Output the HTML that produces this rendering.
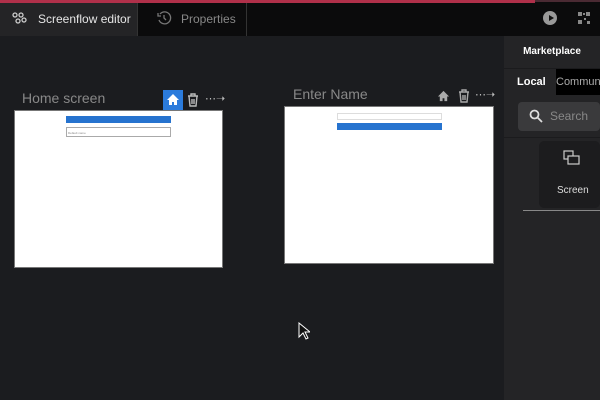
<!DOCTYPE html><html><head><style>
*{margin:0;padding:0;box-sizing:border-box}
body{width:600px;height:400px;background:#1b1c1f;font-family:"Liberation Sans",sans-serif;position:relative;overflow:hidden}
.a{position:absolute}
</style></head><body>
<div class="a" style="left:0;top:0;width:600px;height:36px;background:#0b0b0c"></div>
<div class="a" style="left:0;top:0;width:535px;height:3px;background:#b0304a"></div>
<div class="a" style="left:535px;top:0;width:65px;height:2px;background:#4a2a33"></div>
<div class="a" style="left:0;top:3px;width:137px;height:33px;background:#242426"></div>
<div class="a" style="left:137px;top:3px;width:1px;height:33px;background:#333"></div>
<div class="a" style="left:246px;top:3px;width:1px;height:33px;background:#333"></div>
<svg class="a" style="left:12px;top:12px" width="16" height="14" viewBox="0 0 16 14" fill="none" stroke="#ccc" stroke-width="1.3"><circle cx="3" cy="3" r="2"/><circle cx="9" cy="3" r="2"/><circle cx="6" cy="9" r="2"/><circle cx="12" cy="8" r="2"/></svg>
<div class="a" style="left:38px;top:12px;color:#e6e6e6;font-size:12px">Screenflow editor</div>
<svg class="a" style="left:156px;top:10px" width="16" height="16" viewBox="0 0 16 16" fill="none" stroke="#777" stroke-width="1.3"><path d="M3 10A6 6 0 1 0 4 4"/><path d="M8 5v3l2 2"/><path d="M2 3v3h3"/></svg>
<div class="a" style="left:181px;top:12px;color:#888;font-size:12px">Properties</div>
<div class="a" style="left:543px;top:11px;width:14px;height:14px;border-radius:50%;background:#999"></div>
<div class="a" style="left:549px;top:15px;width:0;height:0;border-left:5px solid #111;border-top:3px solid transparent;border-bottom:3px solid transparent"></div>
<svg class="a" style="left:578px;top:12px" width="12" height="12" viewBox="0 0 12 12" fill="#888"><rect x="0" y="0" width="4" height="4"/><rect x="8" y="0" width="4" height="4"/><rect x="0" y="8" width="4" height="4"/><rect x="6" y="6" width="2" height="2"/><rect x="9" y="9" width="3" height="3"/><rect x="5" y="1" width="2" height="2"/></svg>

<div class="a" style="left:22px;top:90px;color:#888;font-size:14px">Home screen</div>
<div class="a" style="left:163px;top:90px;width:20px;height:20px;background:#2b7bdc"></div>
<svg class="a" style="left:166px;top:93px" width="14" height="13" viewBox="0 0 14 13" fill="#fff"><path d="M7 1L1 7h2v5h3V9h2v3h3V7h2z"/></svg>
<svg class="a" style="left:187px;top:93px" width="12" height="14" viewBox="0 0 12 14" fill="none" stroke="#bbb" stroke-width="1.4"><path d="M1 3h10M4 3V1h4v2M2 3l1 10h6l1-10M5 6v5M7 6v5"/></svg>
<div class="a" style="left:205px;top:92px;color:#bbb;font-size:11px">⋯➝</div>
<div class="a" style="left:14px;top:110px;width:209px;height:158px;background:#fff;border:1px solid #777"></div>
<div class="a" style="left:66px;top:116px;width:105px;height:7px;background:#2673cf"></div>
<div class="a" style="left:66px;top:127px;width:105px;height:10px;border:1px solid #aaa;font-size:3px;color:#888;padding:3px 1px">Default name</div>

<div class="a" style="left:293px;top:86px;color:#888;font-size:14px">Enter Name</div>
<svg class="a" style="left:437px;top:90px" width="13" height="12" viewBox="0 0 14 13" fill="#aaa"><path d="M7 1L1 7h2v5h3V9h2v3h3V7h2z"/></svg>
<svg class="a" style="left:458px;top:89px" width="12" height="14" viewBox="0 0 12 14" fill="none" stroke="#aaa" stroke-width="1.4"><path d="M1 3h10M4 3V1h4v2M2 3l1 10h6l1-10M5 6v5M7 6v5"/></svg>
<div class="a" style="left:475px;top:88px;color:#bbb;font-size:11px">⋯➝</div>
<div class="a" style="left:284px;top:106px;width:210px;height:158px;background:#fff;border:1px solid #777"></div>
<div class="a" style="left:337px;top:113px;width:105px;height:7px;border:1px solid #ddd"></div>
<div class="a" style="left:337px;top:123px;width:105px;height:7px;background:#2673cf"></div>

<svg class="a" style="left:298px;top:322px" width="12" height="18" viewBox="0 0 12 18"><path d="M1 1v14l4-4 3 6 2-1-3-6h5z" fill="#111" stroke="#fff" stroke-width="1"/></svg>

<div class="a" style="left:504px;top:36px;width:96px;height:364px;background:#242426"></div>
<div class="a" style="left:504px;top:68px;width:96px;height:1px;background:#1b1b1d"></div>
<div class="a" style="left:504px;top:46px;width:96px;text-align:center;color:#fff;font-size:10px;font-weight:bold">Marketplace</div>
<div class="a" style="left:517px;top:76px;color:#fff;font-size:11px;font-weight:bold">Local</div>
<div class="a" style="left:556px;top:69px;width:44px;height:26px;background:#000;color:#aaa;font-size:11px;padding:7px 0 0 0;white-space:nowrap;overflow:hidden">Community</div>
<div class="a" style="left:504px;top:137px;width:96px;height:1px;background:#1b1b1d"></div>
<div class="a" style="left:518px;top:102px;width:82px;height:29px;background:#3a3a3c;border-radius:4px"></div>
<svg class="a" style="left:529px;top:109px" width="14" height="14" viewBox="0 0 14 14" fill="none" stroke="#ddd" stroke-width="1.8"><circle cx="5.5" cy="5.5" r="4"/><path d="M8.5 8.5L13 13"/></svg>
<div class="a" style="left:550px;top:109px;color:#888;font-size:12px">Search</div>
<div class="a" style="left:539px;top:141px;width:61px;height:67px;background:#1c1c1e;border-radius:5px"></div>
<svg class="a" style="left:563px;top:150px" width="18" height="16" viewBox="0 0 18 16" fill="none" stroke="#ccc" stroke-width="1.2"><rect x="1" y="1" width="9" height="8"/><rect x="5" y="6" width="11" height="8" fill="#1c1c1e"/></svg>
<div class="a" style="left:557px;top:185px;color:#ddd;font-size:10px">Screen</div>
<div class="a" style="left:523px;top:210px;width:77px;height:1px;background:#888"></div>
</body></html>
